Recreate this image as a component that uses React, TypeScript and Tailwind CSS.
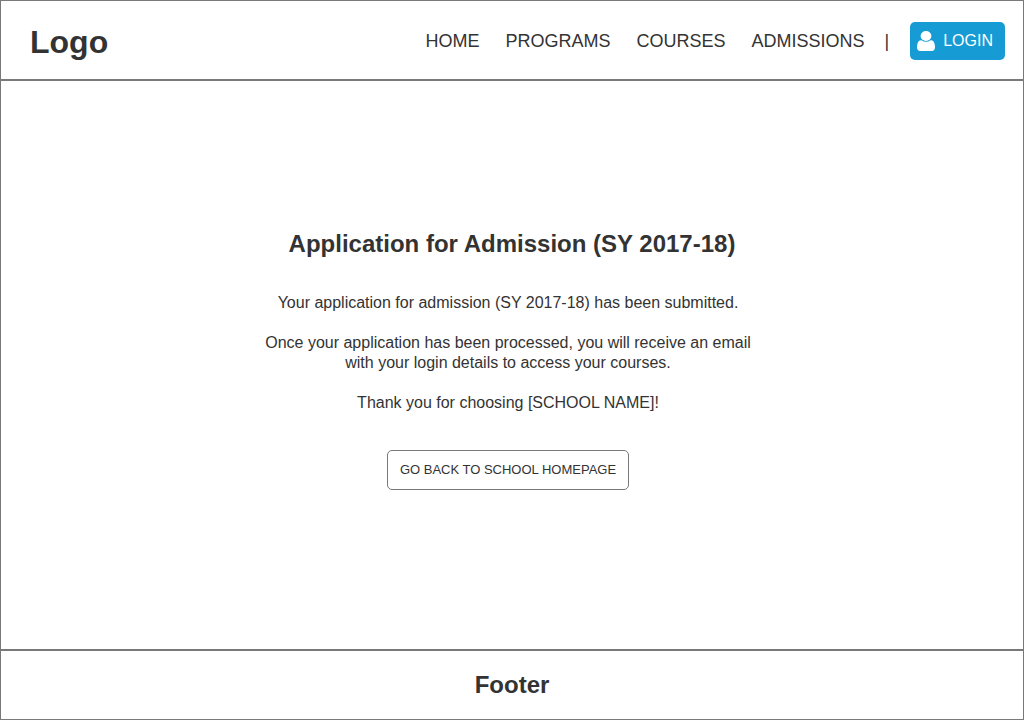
export default function App() {
  return (
    <div className="flex min-h-screen flex-col border border-[#797979] bg-white font-['Liberation_Sans',Arial,sans-serif] text-[#333333]">
      <header className="flex h-20 items-center justify-between border-b-2 border-[#797979] pt-0.5 pr-[18px] pl-[29px]">
        <a href="#" className="pt-0.5 text-[32px] leading-9 font-bold">Logo</a>
        <nav className="flex items-center text-lg leading-5">
          <ul className="flex gap-[26px]">
            <li><a href="#home">HOME</a></li>
            <li><a href="#programs">PROGRAMS</a></li>
            <li><a href="#courses">COURSES</a></li>
            <li><a href="#admissions">ADMISSIONS</a></li>
          </ul>
          <span aria-hidden="true" className="mr-[21px] ml-5">|</span>
          <button type="button" className="flex h-[38px] items-center gap-2 rounded-[5px] bg-[#169bd5] pr-3 pl-[7px] text-base text-white">
            <svg aria-hidden="true" viewBox="0 128 1280 1536" preserveAspectRatio="none" className="h-5 w-[18px]" fill="currentColor">
              <path d="M1280 1399q0 109-62.5 187t-150.5 78h-854q-88 0-150.5-78t-62.5-187q0-85 8.5-160.5t31.5-152 58.5-131 94-89 134.5-34.5q131 128 313 128t313-128q76 0 134.5 34.5t94 89 58.5 131 31.5 152 8.5 160.5zm-256-887q0 159-112.5 271.5t-271.5 112.5-271.5-112.5-112.5-271.5 112.5-271.5 271.5-112.5 271.5 112.5 112.5 271.5z" />
            </svg>
            LOGIN
          </button>
        </nav>
      </header>
      <main className="flex grow flex-col items-center justify-center px-4 pb-[11px] text-center">
        <h1 className="text-2xl leading-7 font-bold">Application for Admission (SY 2017-18)</h1>
        <div className="flex flex-col items-center gap-[37px] pt-[35px] pr-2">
          <div className="flex flex-col gap-5 text-base leading-5">
            <p>Your application for admission (SY 2017-18) has been submitted.</p>
            <p>Once your application has been processed, you will receive an email<br />with your login details to access your courses.</p>
            <p>Thank you for choosing [SCHOOL NAME]!</p>
          </div>
          <button type="button" className="h-10 rounded-[5px] border border-[#797979] px-3 text-[13px]">GO BACK TO SCHOOL HOMEPAGE</button>
        </div>
      </main>
      <footer className="flex h-[70px] items-center justify-center border-t-2 border-[#797979] text-2xl font-bold">Footer</footer>
    </div>
  );
}
